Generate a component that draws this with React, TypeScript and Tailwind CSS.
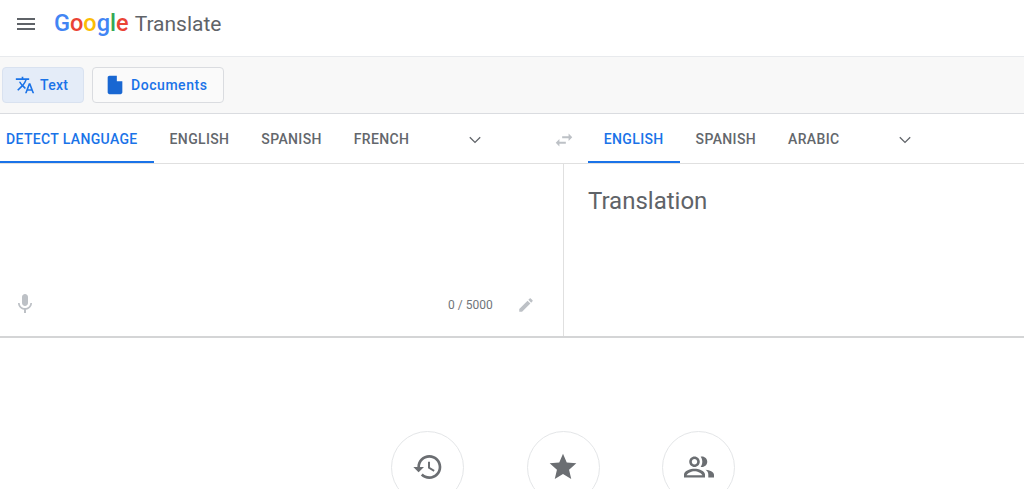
import React from 'react';

const font = "font-['Roboto','Liberation_Sans',sans-serif]";

const Icon: React.FC<{ d: string; className: string }> = ({ d, className }) => (
  <svg viewBox="0 0 24 24" fill="currentColor" fillRule="evenodd" className={className}>
    <path d={d} />
  </svg>
);

const Chevron: React.FC<{ className: string }> = ({ className }) => (
  <svg viewBox="0 0 16 10" fill="none" stroke="#5f6368" strokeWidth="1.6" className={className}>
    <path d="M1.5 1.5 8 8l6.5-6.5" />
  </svg>
);

const paths = {
  menu: 'M3 18h18v-2H3v2zm0-5h18v-2H3v2zm0-7v2h18V6H3z',
  translate:
    'M12.87 15.07l-2.54-2.51.03-.03c1.74-1.94 2.98-4.17 3.71-6.53H17V4h-7V2H8v2H1v1.99h11.17C11.5 7.92 10.44 9.75 9 11.35 8.07 10.32 7.3 9.19 6.69 8h-2c.73 1.63 1.73 3.17 2.98 4.56l-5.09 5.02L4 19l5-5 3.11 3.11.76-2.04zM18.5 10h-2L12 22h2l1.12-3h4.75L21 22h2l-4.5-12zm-2.62 7l1.62-4.33L19.12 17h-3.24z',
  doc: 'M14 2H6c-1.1 0-2 .9-2 2v16c0 1.1.9 2 2 2h12c1.1 0 2-.9 2-2V8h-6V2z',
  swap: 'M6.99 11L3 15l3.99 4v-3H14v-2H6.99v-3zM21 9l-3.99-4v3H10v2h7.01v3L21 9z',
  mic: 'M12 14c1.66 0 2.99-1.34 2.99-3L15 5c0-1.66-1.34-3-3-3S9 3.34 9 5v6c0 1.66 1.34 3 3 3zm5.3-3c0 3-2.54 5.1-5.3 5.1S6.7 14 6.7 11H5c0 3.41 2.72 6.23 6 6.72V21h2v-3.28c3.28-.48 6-3.3 6-6.72h-1.7z',
  edit: 'M3 17.25V21h3.75L17.81 9.94l-3.75-3.75L3 17.25zM20.71 7.04c.39-.39.39-1.02 0-1.41l-2.34-2.34c-.39-.39-1.02-.39-1.41 0l-1.83 1.83 3.75 3.75 1.83-1.83z',
  history:
    'M13 3c-4.97 0-9 4.03-9 9H1l3.89 3.89.07.14L9 12H6c0-3.87 3.13-7 7-7s7 3.13 7 7-3.13 7-7 7c-1.93 0-3.68-.79-4.94-2.06l-1.42 1.42C8.27 19.99 10.51 21 13 21c4.97 0 9-4.03 9-9s-4.03-9-9-9zm-1 5v5l4.28 2.54.72-1.21-3.5-2.08V8H12z',
  star: 'M12 17.27L18.18 21l-1.64-7.03L22 9.24l-7.19-.61L12 2 9.19 8.63 2 9.24l5.46 4.73L5.82 21z',
  people:
    'M9 13.2c-2.6 0-7 1.3-7 3.8V19h14v-2c0-2.5-4.4-3.8-7-3.8zM3.7 17.5c.7-1.4 3.2-2.6 5.3-2.6s4.6 1.2 5.3 2.6H3.7zM9 12c1.93 0 3.5-1.57 3.5-3.5S10.93 5 9 5 5.5 6.57 5.5 8.5 7.07 12 9 12zm0-5.3c1 0 1.8.8 1.8 1.8s-.8 1.8-1.8 1.8-1.8-.8-1.8-1.8.8-1.8 1.8-1.8zm7.4 7.2c1.1.8 1.8 1.9 1.8 3.1V19H22v-1.8c0-1.9-3-3-5.6-3.3zM14 12c1.93 0 3.5-1.57 3.5-3.5S15.93 5 14 5c-.3 0-.6.04-.9.12.7.9 1.1 2.1 1.1 3.38s-.4 2.48-1.1 3.38c.3.08.6.12.9.12z',
};

const Tab: React.FC<{ label: string; active?: boolean; className: string }> = ({ label, active, className }) => (
  <div
    className={`flex h-full items-center whitespace-nowrap border-b-2 pr-4 pt-[4px] text-[14px] font-medium tracking-[0.35px] ${className} ${
      active ? 'border-[#1a73e8] text-[#1a73e8]' : 'border-transparent text-[#63676c]'
    }`}
  >
    {label}
  </div>
);

const RoundButton: React.FC<{ d: string; iconClass: string }> = ({ d, iconClass }) => (
  <div className="flex h-[73px] w-[73px] shrink-0 items-start justify-center rounded-full border border-[#e4e6e8] text-[#6b6e72]">
    <Icon d={d} className={iconClass} />
  </div>
);

export default function App() {
  return (
    <div className={`h-[489px] w-[1024px] overflow-hidden bg-white ${font}`}>
      <header className="flex h-[57px] items-center border-b border-[#e8eaed] pb-[8px]">
        <Icon d={paths.menu} className="ml-[14px] h-6 w-6 text-[#5f6368]" />
        <div className="ml-[16px] flex items-baseline leading-none">
          <span className="text-[23.5px] font-medium text-[#4285f4]">G</span>
          <span className="text-[23.5px] font-medium text-[#ea4335]">o</span>
          <span className="text-[23.5px] font-medium text-[#fbbc05]">o</span>
          <span className="text-[23.5px] font-medium text-[#4285f4]">g</span>
          <span className="text-[23.5px] font-medium text-[#34a853]">l</span>
          <span className="text-[23.5px] font-medium text-[#ea4335]">e</span>
          <span className="ml-[6px] text-[21px] text-[#5f6368]">Translate</span>
        </div>
      </header>

      <div className="flex h-[57px] items-center gap-2 border-b border-[#dadce0] bg-[#f8f8f8] pl-[2px]">
        <div className="flex h-[36px] w-[82px] items-center rounded border border-[#d9e2f0] bg-[#e4ecf8] pl-[12px] text-[14px] font-medium tracking-[0.25px] text-[#1a73e8]">
          <Icon d={paths.translate} className="h-[20px] w-[20px]" />
          <span className="ml-[5px]">Text</span>
        </div>
        <div className="flex h-[36px] w-[132px] items-center rounded border border-[#dadce0] bg-[#fafafa] pl-[11px] text-[14px] font-medium tracking-[0.55px] text-[#1a73e8]">
          <Icon d={paths.doc} className="h-[22px] w-[22px] text-[#1967d2]" />
          <span className="ml-[5px]">Documents</span>
        </div>
      </div>

      <div className="flex h-[50px] items-center border-b border-[#e0e0e0]">
        <Tab label="DETECT LANGUAGE" active className="pl-[6px]" />
        <Tab label="ENGLISH" className="pl-4" />
        <Tab label="SPANISH" className="pl-4" />
        <Tab label="FRENCH" className="pl-4" />
        <Chevron className="ml-[42.5px] mt-[2px] h-[8px] w-[14px]" />
        <Icon d={paths.swap} className="ml-[71px] mt-[2px] h-[22px] w-[22px] text-[#bdc1c6]" />
        <Tab label="ENGLISH" active className="ml-[13px] pl-4" />
        <Tab label="SPANISH" className="pl-4" />
        <Tab label="ARABIC" className="pl-4" />
        <Chevron className="ml-[43px] mt-[2px] h-[8px] w-[14px]" />
      </div>

      <div className="flex h-[174px] border-b-2 border-[#d4d5d6]">
        <div className="flex w-[564px] items-end border-r border-[#e0e0e0] pb-[20px]">
          <Icon d={paths.mic} className="ml-[13px] h-6 w-6 text-[#bdc1c6]" />
          <span className="ml-[411px] mb-[2px] text-[12px] text-[#70757a]">0 / 5000</span>
          <Icon d={paths.edit} className="ml-[24px] mb-[2px] h-[18px] w-[18px] text-[#bdc1c6]" />
        </div>
        <div className="flex-1 pl-[24px] pt-[21px] text-[24px] leading-[32px] text-[#5f6368]">Translation</div>
      </div>

      <div className="flex gap-[62.5px] pl-[391px] pt-[93px]">
        <RoundButton d={paths.history} iconClass="mt-[19px] h-8 w-8" />
        <RoundButton d={paths.star} iconClass="mt-[19px] h-8 w-8" />
        <RoundButton d={paths.people} iconClass="mt-[17px] h-9 w-9" />
      </div>
    </div>
  );
}
